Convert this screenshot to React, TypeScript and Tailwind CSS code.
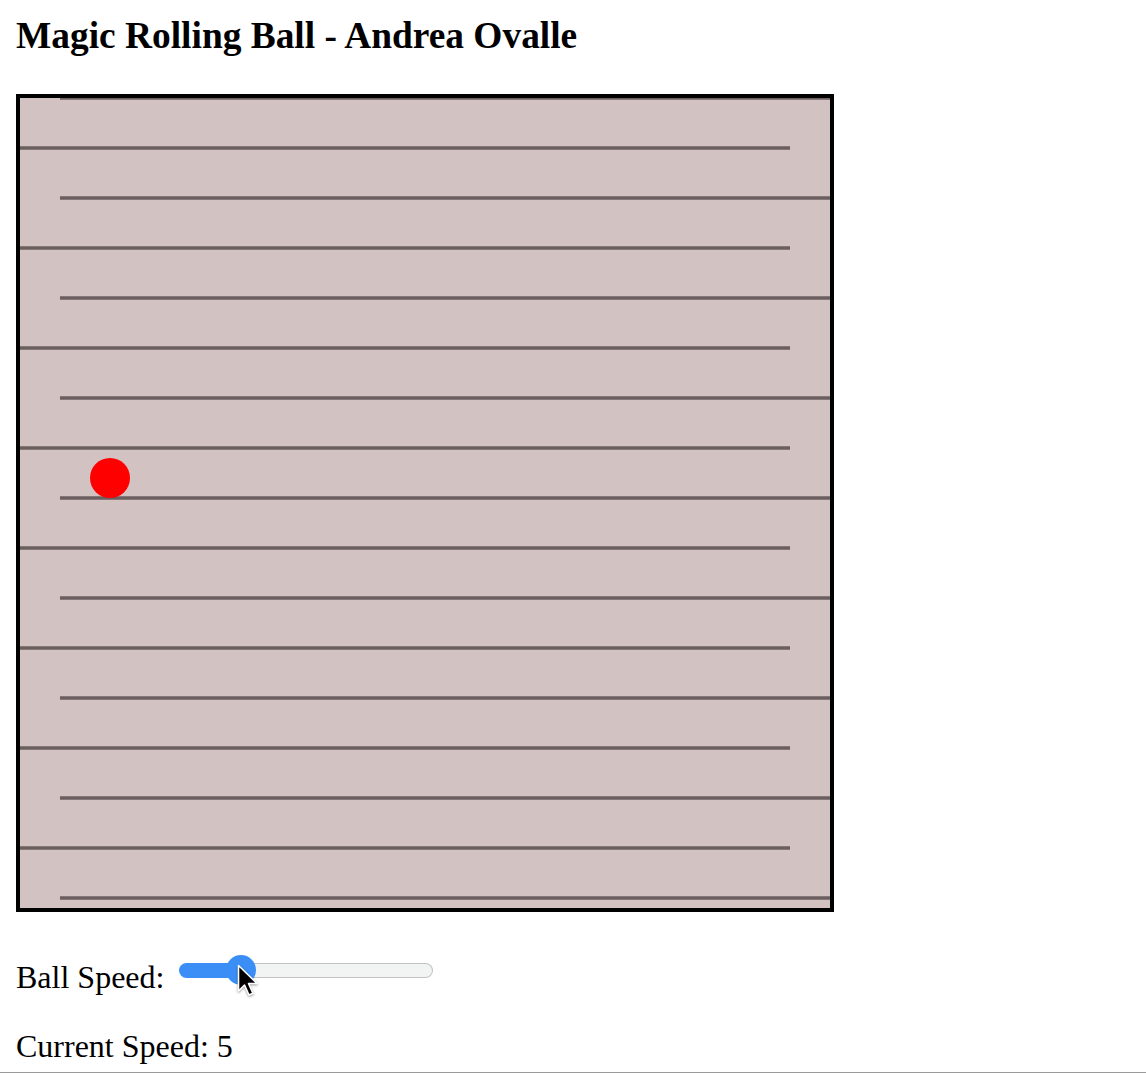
const ROWS = Array.from({ length: 17 }, (_, i) => i * 50);

function Board() {
  return (
    <div className="h-[818px] w-[818px] border-4 border-black bg-[#d3c2c2]">
      <svg width="810" height="810" viewBox="0 0 810 810" className="block">
        {ROWS.map((y, i) =>
          i % 2 === 0 ? (
            <line key={y} x1="40" y1={y} x2="810" y2={y} stroke="#6b5e5e" strokeWidth="3.5" />
          ) : (
            <line key={y} x1="0" y1={y} x2="770" y2={y} stroke="#6b5e5e" strokeWidth="3.5" />
          )
        )}
        <circle cx="90" cy="380" r="20" fill="#ff0000" />
      </svg>
    </div>
  );
}

function SpeedSlider() {
  return (
    <div className="relative -mt-[4px] ml-[15px] flex h-[30px] w-[254px] items-center">
      {/* track: filled part + empty part */}
      <div className="flex h-[15px] w-full">
        <div className="w-[62px] rounded-l-full bg-[#3a8ef6]" />
        <div className="flex-1 rounded-r-full border-[1.5px] border-l-0 border-[#c2c2c2] bg-[#f2f3f3]" />
      </div>
      {/* thumb sits over the track */}
      <div className="absolute left-[47px] top-0 h-[30px] w-[30px] rounded-full bg-[#3a8ef6]" />
      {/* mouse pointer over the thumb */}
      <svg
        className="absolute left-[58px] top-[9px] drop-shadow-[0_1px_1px_rgba(0,0,0,0.4)]"
        width="22"
        height="34"
        viewBox="-1.5 -1.5 22 34"
      >
        <path
          d="M0 0 L0 25.5 L6 19.5 L10.5 29.5 L14.5 27.8 L10 18 L18.5 18 Z"
          fill="#000"
          stroke="#fff"
          strokeWidth="1.6"
          strokeLinejoin="round"
        />
      </svg>
    </div>
  );
}

export default function App() {
  return (
    <div className="flex min-h-[1074px] flex-col bg-white font-['Liberation_Serif',serif] text-black">
      <div className="flex flex-col items-start pl-[16px] pt-[14px]">
        <h3 className="text-[37.4px] font-bold leading-[43px]">
          Magic Rolling Ball - Andrea Ovalle
        </h3>

        <div className="mt-[37px]">
          <Board />
        </div>

        <div className="mt-[47px] flex items-start">
          <span className="text-[32px] leading-[37px]">Ball Speed:</span>
          <SpeedSlider />
        </div>

        <p className="mt-[32px] text-[32px] leading-[37px]">Current Speed: 5</p>
      </div>

      <div className="mt-[7px] h-px w-full bg-[#9a9a9a]" />
    </div>
  );
}
